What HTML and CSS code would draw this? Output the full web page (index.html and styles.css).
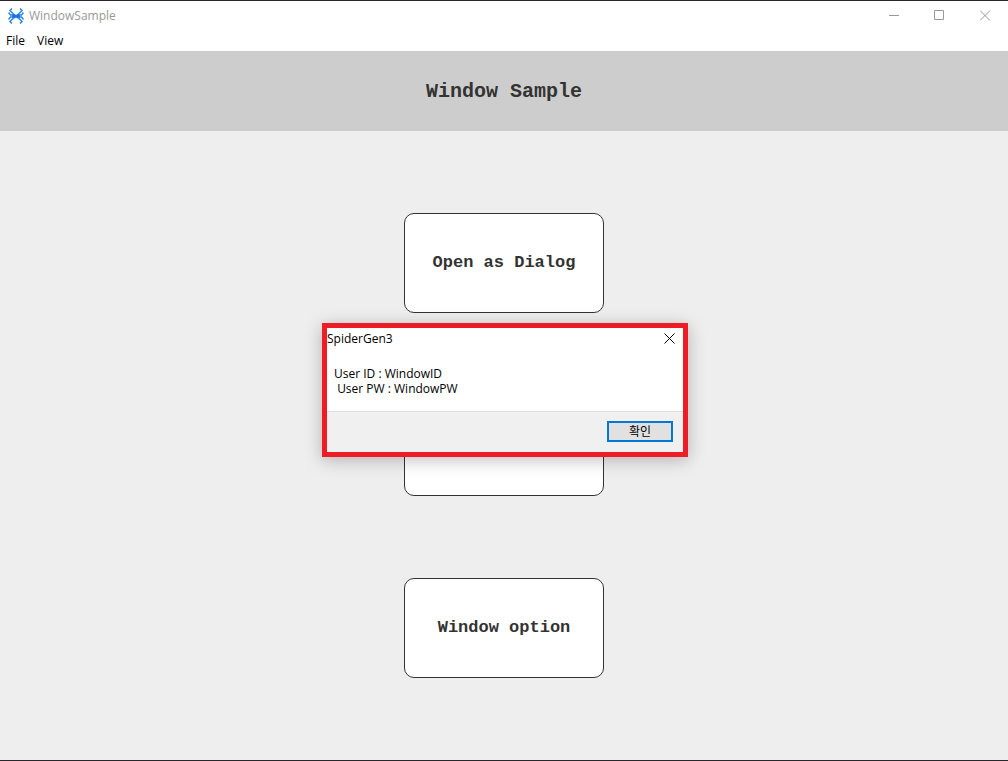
FILE: index.html
```html
<!DOCTYPE html>
<html lang="en">
<head>
<meta charset="utf-8">
<title>WindowSample</title>
<link rel="stylesheet" href="styles.css">
</head>
<body>
<div class="window">
  <header class="titlebar">
    <svg class="logo" width="16" height="16" viewBox="0 0 16 16" aria-hidden="true">
      <g fill="none" stroke="#2b84ee" stroke-width="1.500">
        <path d="M4 .5L2 2.500L6.500 7M12 .5l2 2L9.500 7"/>
        <path d="M.5 4.500L2.500 7H6M15.500 4.500L13.500 7H10"/>
        <path d="M.5 11.500L2.500 9H6M15.500 11.500L13.500 9H10"/>
        <path d="M4 15.500L2 13.500L6.500 9M12 15.500l2-2L9.500 9"/>
      </g>
      <path fill="#1a74e8" d="M4 7L6.500 6 8 7l1.500-1L12 7v2l-2.500 1.500L8 9.500l-1.500 1L4 9z"/>
    </svg>
    <span class="app-name">WindowSample</span>
    <div class="controls">
      <button class="control" type="button" aria-label="Minimize"><svg width="12" height="11" viewBox="0 0 12 11"><path d="M2 5.500h10"/></svg></button>
      <button class="control" type="button" aria-label="Maximize"><svg width="11" height="11" viewBox="0 0 11 11"><path d="M.5 .5h9v9h-9z"/></svg></button>
      <button class="control" type="button" aria-label="Close"><svg width="11" height="11" viewBox="0 0 11 11"><path d="M0 .5l10 10M10 .5l-10 10"/></svg></button>
    </div>
  </header>
  <nav class="menubar">
    <button class="menu" type="button">File</button>
    <button class="menu" type="button">View</button>
  </nav>
  <div class="banner"><h1 class="heading">Window Sample</h1></div>
  <main class="stage">
    <button class="card" type="button">Open as Dialog</button>
    <button class="card" type="button"></button>
    <button class="card" type="button">Window option</button>
  </main>
</div>
<section class="dialog" role="dialog" aria-labelledby="dialog-title">
  <header class="dialog-head">
    <span id="dialog-title">SpiderGen3</span>
    <button class="dialog-close" type="button" aria-label="Close"><svg width="11" height="11" viewBox="0 0 11 11"><path d="M.5 .5l10 10M10.500 .5l-10 10"/></svg></button>
  </header>
  <p class="message">User ID : WindowID
 User PW : WindowPW</p>
  <footer class="dialog-foot"><button class="confirm" type="button" lang="ko">확인</button></footer>
</section>
</body>
</html>
```
FILE: styles.css
```css
* { box-sizing: border-box; }
body {
  margin: 0;
  font-family: "Open Sans", "Noto Sans CJK KR", sans-serif;
  font-size: 12px;
  line-height: 15px;
  color: #000;
}
button {
  margin: 0;
  padding: 0;
  border: 0;
  background: none;
  font: inherit;
  color: inherit;
}
.window {
  display: flex;
  flex-direction: column;
  min-height: 100vh;
  border-top: 1px solid #2b262b;
  border-bottom: 1px solid #2b262b;
  background: #eee;
}
.titlebar {
  display: flex;
  align-items: center;
  height: 29px;
  padding-left: 8px;
  background: #fff;
}
.app-name { margin-left: 5px; color: #999; }
.controls { display: flex; margin-left: auto; }
.control {
  display: grid;
  place-items: center;
  width: 46px;
  height: 29px;
}
.control svg { fill: none; stroke: #999; }
.menubar {
  display: flex;
  gap: 12px;
  height: 21px;
  padding: 0 6px;
  background: #fff;
}
.banner {
  display: grid;
  place-items: center;
  height: 80px;
  background: #cdcdcd;
}
.heading {
  margin: 0;
  padding-top: 2px;
  font: bold 20px/24px "Courier New", "Liberation Mono", monospace;
  color: #333;
}
.stage {
  flex: 1;
  display: flex;
  flex-direction: column;
  align-items: center;
  justify-content: space-evenly;
}
.card {
  width: 200px;
  height: 100px;
  border: 1px solid #333;
  border-radius: 10px;
  background: #fff;
  font: bold 17px/20px "Courier New", "Liberation Mono", monospace;
  color: #333;
}
.dialog {
  position: absolute;
  top: 323px;
  left: calc(50% - 182px);
  width: 366px;
  border: 5px solid #ee1c24;
  background: #fff;
  box-shadow: 0 3px 16px rgba(0, 0, 0, .25);
}
.dialog-head {
  display: flex;
  align-items: center;
  justify-content: space-between;
  height: 20px;
  padding-right: 8px;
}
.dialog-close { display: grid; }
.dialog-close svg { fill: none; stroke: #000; }
.message {
  margin: 0;
  padding: 18px 7px 15px;
  white-space: pre-wrap;
}
.dialog-foot {
  display: flex;
  justify-content: flex-end;
  height: 41px;
  padding: 9px 10px;
  border-top: 1px solid #dfdfdf;
  background: #f0f0f0;
}
.confirm {
  width: 66px;
  height: 21px;
  border: 2px solid #0078d7;
  background: #e1e1e1;
}
```
